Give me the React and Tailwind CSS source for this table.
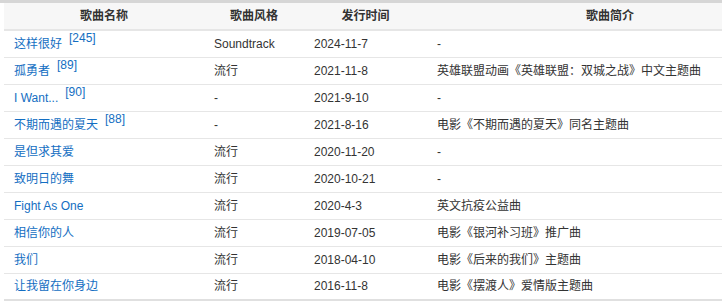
const SONGS = [
  { name: '这样很好', ref: '[245]', style: 'Soundtrack', date: '2024-11-7', desc: '-' },
  { name: '孤勇者', ref: '[89]', style: '流行', date: '2021-11-8', desc: '英雄联盟动画《英雄联盟：双城之战》中文主题曲' },
  { name: 'I Want...', ref: '[90]', style: '-', date: '2021-9-10', desc: '-' },
  { name: '不期而遇的夏天', ref: '[88]', style: '-', date: '2021-8-16', desc: '电影《不期而遇的夏天》同名主题曲' },
  { name: '是但求其爱', style: '流行', date: '2020-11-20', desc: '-' },
  { name: '致明日的舞', style: '流行', date: '2020-10-21', desc: '-' },
  { name: 'Fight As One', style: '流行', date: '2020-4-3', desc: '英文抗疫公益曲' },
  { name: '相信你的人', style: '流行', date: '2019-07-05', desc: '电影《银河补习班》推广曲' },
  { name: '我们', style: '流行', date: '2018-04-10', desc: '电影《后来的我们》主题曲' },
  { name: '让我留在你身边', style: '流行', date: '2016-11-8', desc: '电影《摆渡人》爱情版主题曲' },
];

export default function App() {
  return (
    <div
      className="w-[722px] h-[307px] overflow-hidden bg-white text-[12px] text-[#333]"
      style={{ fontFamily: '"Liberation Sans", Arial, "Noto Sans CJK SC", sans-serif' }}
    >
      <div className="h-[3px] bg-[#d6d6d6]" />
      <table className="ml-[4px] w-[789px] table-fixed border-collapse">
        <colgroup>
          <col className="w-[200px]" />
          <col className="w-[100px]" />
          <col className="w-[123px]" />
          <col />
        </colgroup>
        <thead>
          <tr className="h-[27px] bg-[#f7f7f7] border-b-2 border-[#e6e6e6]">
            <th className="font-bold text-center">歌曲名称</th>
            <th className="font-bold text-center">歌曲风格</th>
            <th className="font-bold text-center">发行时间</th>
            <th className="font-bold text-center">歌曲简介</th>
          </tr>
        </thead>
        <tbody>
          {SONGS.map((s, i) => (
            <tr
              key={s.name}
              className={`h-[27px] ${i === SONGS.length - 1 ? 'border-b-2 border-[#e0e0e0]' : 'border-b border-[#e6e6e6]'}`}
            >
              <td className="px-[10px] whitespace-nowrap">
                <span className="text-[#136ec2]">{s.name}</span>
                {s.ref && (
                  <sup className="relative top-[-6px] ml-[7px] text-[12px] text-[#136ec2]">{s.ref}</sup>
                )}
              </td>
              <td className="px-[10px] whitespace-nowrap">{s.style}</td>
              <td className="px-[10px] whitespace-nowrap">{s.date}</td>
              <td className="px-[10px] whitespace-nowrap">{s.desc}</td>
            </tr>
          ))}
        </tbody>
      </table>
    </div>
  );
}
